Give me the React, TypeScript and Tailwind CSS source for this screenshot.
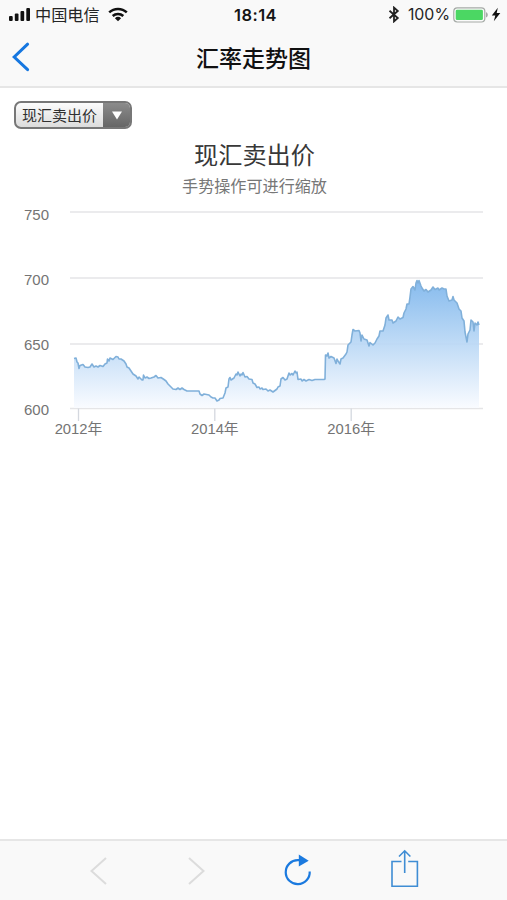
type Point = [number, number]

const LINE: Point[] = [
  [74, 358.5], [76, 358], [77, 362], [78, 363], [79, 368.5], [80, 365.5], [83, 364.5], [85, 367], [88, 367.5], [90, 367], [92, 364],
  [94, 367], [96, 366], [98, 367], [100, 365.5], [103, 366.5], [105, 364], [107, 363], [107.5, 359], [109, 361], [110, 358], [113, 359.5],
  [116, 356.5], [118, 357], [119, 359], [121, 359], [124, 361], [126, 364], [127, 367], [129, 368], [131, 371], [133, 374], [136, 376],
  [138, 379], [139, 377], [142, 380], [143, 380], [143.5, 375], [145, 378], [147, 377], [149, 378.5], [151, 378], [154, 377],
  [156, 375.5], [158, 378], [161, 377.5], [164, 379.5], [166, 381], [168, 384], [170, 386], [173, 389], [176, 389.5], [178, 388],
  [180, 389.5], [182, 388], [184, 389.5], [187, 391], [199, 391], [200, 394], [202, 395.5], [204, 394], [209, 395], [211, 397],
  [213, 398], [215, 398], [217, 401], [219, 400], [220, 398.5], [223, 398], [225, 393], [226, 388], [228, 387], [229, 379],
  [230, 377.5], [231, 380], [234, 378], [236, 374], [237, 375], [238, 372], [240, 376], [241, 374], [242, 375], [243, 372.5],
  [245, 377], [247, 376.5], [249, 379], [252, 379.5], [253, 383], [255, 384], [257, 387.5], [259, 387], [260, 389], [262, 388],
  [263, 389.5], [266, 389], [268, 391], [270, 390], [273, 392], [277, 389], [278, 387], [280, 386], [281, 379], [283, 377.5],
  [285, 380], [287, 379], [289, 373], [290, 375], [292, 373.5], [293, 375], [295, 371], [296, 373], [297, 372], [298, 379.5],
  [301, 379], [302, 381], [304, 379.5], [306, 381], [309, 379.5], [312, 380.5], [315, 379.5], [324, 379.5], [325, 379],
  [325.5, 355], [327, 356], [328, 353], [329, 358], [331, 356.5], [334, 358], [336, 363.5], [337, 359], [338, 361], [340, 364],
  [341, 359], [343, 358], [346, 354], [347, 352], [348, 345], [351, 342], [352, 335], [353, 329.5], [355, 331], [359, 330.5],
  [360, 333], [361, 341], [362, 335], [364, 339], [367, 340], [369, 346], [370, 342.5], [373, 345], [375, 343], [377, 339],
  [379, 336], [380, 331], [383, 331], [385, 325], [386, 318], [388, 315], [389, 320], [392, 320], [393, 323], [396, 321],
  [398, 317], [400, 319], [403, 317.5], [404, 313], [406, 309], [407, 304], [409, 304], [410, 297], [411, 289], [413, 286.5],
  [415, 290], [416, 283], [417, 280.5], [418, 283], [419, 280.5], [421, 286], [422, 288], [424, 291], [426, 289.5], [428, 292],
  [431, 290], [433, 287], [435, 289.5], [438, 288], [439, 290], [442, 288], [444, 289], [446, 289], [447, 296], [449, 301],
  [452, 300], [453, 296.5], [454, 300], [457, 303], [459, 309], [461, 311], [462, 318], [464, 321], [465, 332], [467, 342],
  [468, 334], [470, 330], [471, 320], [473, 322], [474, 331], [475, 323], [477, 325], [478, 322], [479, 325]
]

const Y_TICKS = [
  { label: '750', line: 212, text: 219.5 },
  { label: '700', line: 278, text: 284.5 },
  { label: '650', line: 344, text: 349.5 },
  { label: '600', line: 408.5, text: 415 }
]

const X_TICKS = [
  { label: '2012年', x: 78.5 },
  { label: '2014年', x: 214.8 },
  { label: '2016年', x: 351.2 }
]

function StatusBar() {
  return (
    <div className="relative flex h-[30px] items-center justify-between pr-[6px] pl-[8px] text-[#252525]">
      <div className="flex h-[28px] items-center self-start">
        <svg width="23" height="15" viewBox="0 0 23 15" fill="#111">
          <rect x="1" y="9" width="3.7" height="5" rx="1" />
          <rect x="6.8" y="6.5" width="3.7" height="7.5" rx="1" />
          <rect x="12.5" y="4" width="3.7" height="10" rx="1" />
          <rect x="18.3" y="1" width="3.7" height="13" rx="1" />
        </svg>
        <span className="ml-[4px] text-[16.2px] leading-[28px]">中国电信</span>
        <svg className="ml-[8px]" width="20" height="15" viewBox="0 0 20 15" fill="none" stroke="#111" strokeWidth="2.5">
          <path d="M1.2 5.4a12.8 12.8 0 0 1 17.6 0" />
          <path d="M4.7 9a7.7 7.7 0 0 1 10.6 0" />
          <path d="M10 14.3 6.9 11.3a4.5 4.5 0 0 1 6.2 0Z" fill="#111" stroke="none" />
        </svg>
      </div>
      <span className="absolute left-[234px] text-[16.5px] leading-[30px] font-semibold tracking-[0.45px] text-[#151515] font-[Inter,sans-serif]">18:14</span>
      <div className="flex h-[29px] items-center self-start">
        <svg width="12" height="17" viewBox="0 0 12 17" fill="none" stroke="#222" strokeWidth="1.8">
          <path d="m1.5 4.7 8.3 7.3L6 15.4V1.6L9.8 5l-8.3 7.3" />
        </svg>
        <span className="ml-[8px] text-[15.9px] leading-[29px] font-[Inter,sans-serif]">100%</span>
        <svg className="ml-[3px]" width="36" height="16" viewBox="0 0 36 16">
          <rect x="0.8" y="0.8" width="31" height="14.2" rx="3.4" fill="#fafafa" stroke="#a5aaa6" strokeWidth="1.2" />
          <rect x="2.7" y="2.7" width="27.2" height="10.4" rx="1.4" fill="#4bd763" />
          <path d="M33 5.3c2.4.6 2.4 4.6 0 5.2Z" fill="#a5aaa6" />
        </svg>
        <svg className="ml-[2px]" width="10" height="15" viewBox="0 0 10 15" fill="#111">
          <path d="M6.8.8.8 8.5h3.5L2.8 14.2 9.3 6H5.7Z" />
        </svg>
      </div>
    </div>
  )
}

function NavBar() {
  return (
    <div className="grid h-[54px] grid-cols-[60px_1fr_60px] items-center">
      <button type="button" aria-label="返回" className="pl-[11px]">
        <svg width="20" height="30" viewBox="0 0 20 30" fill="none" stroke="#1677e0" strokeWidth="3" strokeLinecap="round">
          <path d="M16.6 2.2 3.2 15l13.4 12.6" />
        </svg>
      </button>
      <h1 className="text-center text-[23px] leading-[54px] font-medium text-[#111]">汇率走势图</h1>
    </div>
  )
}

function PriceSelect() {
  return (
    <button
      type="button"
      className="mt-[13px] ml-[14px] flex h-[28px] w-[118px] shrink-0 overflow-hidden rounded-[7px] border-2 border-[#777] bg-linear-to-b from-[#fcfcfc] to-[#dcdcdc]"
    >
      <span className="flex-1 pl-[6px] text-left text-[15px] leading-[24px] whitespace-nowrap text-[#303030]">现汇卖出价</span>
      <span className="flex h-full w-[27px] items-center justify-center bg-linear-to-b from-[#8c8c8c] to-[#666]">
        <svg width="10" height="9" viewBox="0 0 10 9" fill="#fff">
          <path d="M0 .5h10L5 8.5Z" />
        </svg>
      </span>
    </button>
  )
}

function RateChart() {
  const line = LINE.map(([x, y]) => `${x},${y}`).join(' ')
  return (
    <section className="flex flex-col">
      <h2 className="mt-[8px] pl-[2px] text-center text-[24.2px] leading-[34px] text-[#383838]">现汇卖出价</h2>
      <p className="mt-[2px] pl-[2px] text-center text-[16.1px] leading-[24px] text-[#777]">手势操作可进行缩放</p>
      <svg width="507" height="242" viewBox="0 197 507 242" className="font-['Liberation_Sans','Noto_Sans_CJK_SC',sans-serif]">
        <defs>
          <linearGradient id="area" gradientUnits="userSpaceOnUse" x1="0" y1="280" x2="0" y2="408">
            <stop offset="0" stopColor="#7cb5ec" />
            <stop offset="1" stopColor="#f9fbff" />
          </linearGradient>
        </defs>
        {Y_TICKS.map(t => (
          <g key={t.label}>
            <path d={`M70 ${t.line}H483`} stroke="#e5e5e7" strokeWidth="1.5" />
            <text x="24" y={t.text} fontSize="15" fill="#747474">
              {t.label}
            </text>
          </g>
        ))}
        <polygon points={`74,408 ${line} 479,408`} fill="url(#area)" fillOpacity="0.92" />
        <polyline points={line} fill="none" stroke="#80b0da" strokeWidth="1.6" strokeLinejoin="round" />
        {X_TICKS.map(t => (
          <g key={t.label}>
            <path d={`M${t.x} 408.5V421`} stroke="#d4d8df" strokeWidth="1.3" />
            <text x={t.x} y="433.5" fontSize="14.8" fill="#747474" textAnchor="middle">
              {t.label}
            </text>
          </g>
        ))}
      </svg>
    </section>
  )
}

function Toolbar() {
  return (
    <footer className="flex h-[61px] shrink-0 items-start border-t-2 border-[#e6e6e6] bg-[#f9f9f9] pl-[89px]">
      <svg className="mt-[15px]" width="19" height="30" viewBox="0 0 19 30" fill="none" stroke="#dcdcdc" strokeWidth="2">
        <path d="M17 2 2.5 15 17 28" />
      </svg>
      <svg className="mt-[15px] ml-[79px]" width="19" height="30" viewBox="0 0 19 30" fill="none" stroke="#dcdcdc" strokeWidth="2">
        <path d="m2 2 14.5 13L2 28" />
      </svg>
      <svg className="mt-[13px] ml-[77px]" width="30" height="34" viewBox="0 0 30 34">
        <path d="M17 6.2H15A12 12 0 1 0 26.7 17.5" fill="none" stroke="#1b7adf" strokeWidth="2.2" />
        <path d="M15.8.5 25.7 6.8 15.8 12.5Z" fill="#1b7adf" />
      </svg>
      <svg className="mt-[8px] ml-[77px]" width="30" height="40" viewBox="0 0 30 40" fill="none" stroke="#3f8dd4" strokeWidth="1.6">
        <path d="M11.5 12.5H2v24.7h25.4V12.5h-9.2" />
        <path d="M14.7 24V2M9 7.5 14.7 1.8l5.7 5.7" />
      </svg>
    </footer>
  )
}

export default function App() {
  return (
    <div className="flex h-[900px] w-[507px] flex-col overflow-hidden bg-white font-['Noto_Sans_CJK_SC',sans-serif]">
      <header className="h-[88px] shrink-0 border-b-2 border-[#e6e6e6] bg-[#f9f9f9]">
        <StatusBar />
        <NavBar />
      </header>
      <main className="flex flex-1 flex-col">
        <PriceSelect />
        <RateChart />
      </main>
      <Toolbar />
    </div>
  )
}
